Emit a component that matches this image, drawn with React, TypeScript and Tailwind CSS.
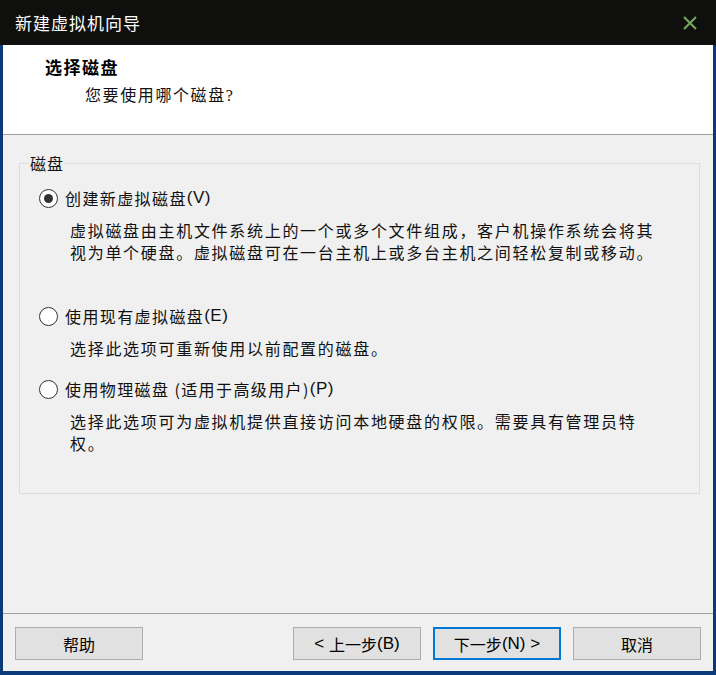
import React from "react"

const font = { fontFamily: '"Noto Sans CJK SC", "Noto Sans", sans-serif' }
const latin = { fontFamily: '"Liberation Sans", "Noto Sans CJK SC", sans-serif' }

function Radio({ checked }: { checked?: boolean }) {
  return (
    <span className="w-[19px] h-[19px] rounded-full border border-[#333333] bg-white flex items-center justify-center shrink-0">
      {checked && <span className="w-[9px] h-[9px] rounded-full bg-[#333333]" />}
    </span>
  )
}

function Option({
  label,
  hotkey,
  lines,
  checked,
  className,
}: {
  label: string
  hotkey: string
  lines: string[]
  checked?: boolean
  className: string
}) {
  return (
    <div className={className}>
      <div className="flex items-center h-[22px] pl-[19px]">
        <Radio checked={checked} />
        <span className="ml-[7px] text-[16px] tracking-[1.4px] text-[#111]">{label}</span>
        <span className="text-[17px] tracking-[0.5px] text-[#111]" style={latin}>
          {hotkey}
        </span>
      </div>
      <div className="mt-[10px] pl-[50px] text-[16px] leading-[22px] tracking-[1.7px] text-[#111]">
        {lines.map((l) => (
          <div key={l} className="whitespace-nowrap">
            {l}
          </div>
        ))}
      </div>
    </div>
  )
}

function Button({ children, primary }: { children: React.ReactNode; primary?: boolean }) {
  return (
    <button
      className={
        "w-[128px] h-[33px] bg-[#e1e1e1] text-[16px] text-black flex items-center justify-center " +
        (primary ? "border-2 border-[#0078d7]" : "border border-[#adadad]")
      }
    >
      {children}
    </button>
  )
}

function Latin({ children }: { children: React.ReactNode }) {
  return (
    <span className="text-[17px]" style={latin}>
      {children}
    </span>
  )
}

export default function App() {
  return (
    <div className="w-[716px] h-[675px] bg-[#0a3a7a] flex flex-col" style={font}>
      {/* title bar */}
      <div className="h-[45px] bg-[#0f100d] flex items-center justify-between pl-[15px] pr-[18px]">
        <span className="text-white text-[17px] tracking-[1px]">新建虚拟机向导</span>
        <svg width="16" height="16" viewBox="0 0 16 16">
          <path d="M2 2 L14 14 M14 2 L2 14" stroke="#6fa660" strokeWidth="2.2" />
        </svg>
      </div>

      <div className="flex-1 mx-[3px] mb-[4px] bg-[#f0f0f0] flex flex-col">
        {/* header */}
        <div className="h-[90px] bg-white border-b border-[#a0a0a0] pt-[13px]">
          <div
            className="pl-[42px] text-[17px] leading-[22px] font-bold tracking-[1.5px] text-black"
            style={{ fontFamily: '"Liberation Serif", "Noto Sans CJK SC", serif' }}
          >
            选择磁盘
          </div>
          <div
            className="pl-[82px] mt-[5px] text-[16px] leading-[22px] tracking-[1.6px] text-[#111]"
            style={{ fontFamily: '"Liberation Serif", "Noto Sans CJK SC", serif' }}
          >
            您要使用哪个磁盘?
          </div>
        </div>

        {/* content */}
        <div className="flex-1 pt-[28px] pl-[16px]">
          <div className="relative w-[681px] h-[331px] border border-[#dcdcdc] pt-[23px]">
            <span className="absolute -top-[11px] left-[9px] px-[1px] bg-[#f0f0f0] text-[16px] leading-[20px] tracking-[1px] text-[#111]">
              磁盘
            </span>
            <Option
              className=""
              checked
              label="创建新虚拟磁盘"
              hotkey="(V)"
              lines={[
                "虚拟磁盘由主机文件系统上的一个或多个文件组成，客户机操作系统会将其",
                "视为单个硬盘。虚拟磁盘可在一台主机上或多台主机之间轻松复制或移动。",
              ]}
            />
            <Option
              className="mt-[42px]"
              label="使用现有虚拟磁盘"
              hotkey="(E)"
              lines={["选择此选项可重新使用以前配置的磁盘。"]}
            />
            <Option
              className="mt-[19px]"
              label="使用物理磁盘 (适用于高级用户)"
              hotkey="(P)"
              lines={[
                "选择此选项可为虚拟机提供直接访问本地硬盘的权限。需要具有管理员特",
                "权。",
              ]}
            />
          </div>
        </div>

        {/* footer */}
        <div className="h-[58px] border-t border-[#a0a0a0] pt-[13px] px-[12px] flex">
          <Button>帮助</Button>
          <div className="flex-1" />
          <div className="flex gap-[12px]">
            <Button>
              <Latin>&lt;&nbsp;</Latin>上一步<Latin>(B)</Latin>
            </Button>
            <Button primary>
              下一步<Latin>(N)&nbsp;&gt;</Latin>
            </Button>
            <Button>取消</Button>
          </div>
        </div>
      </div>
    </div>
  )
}
